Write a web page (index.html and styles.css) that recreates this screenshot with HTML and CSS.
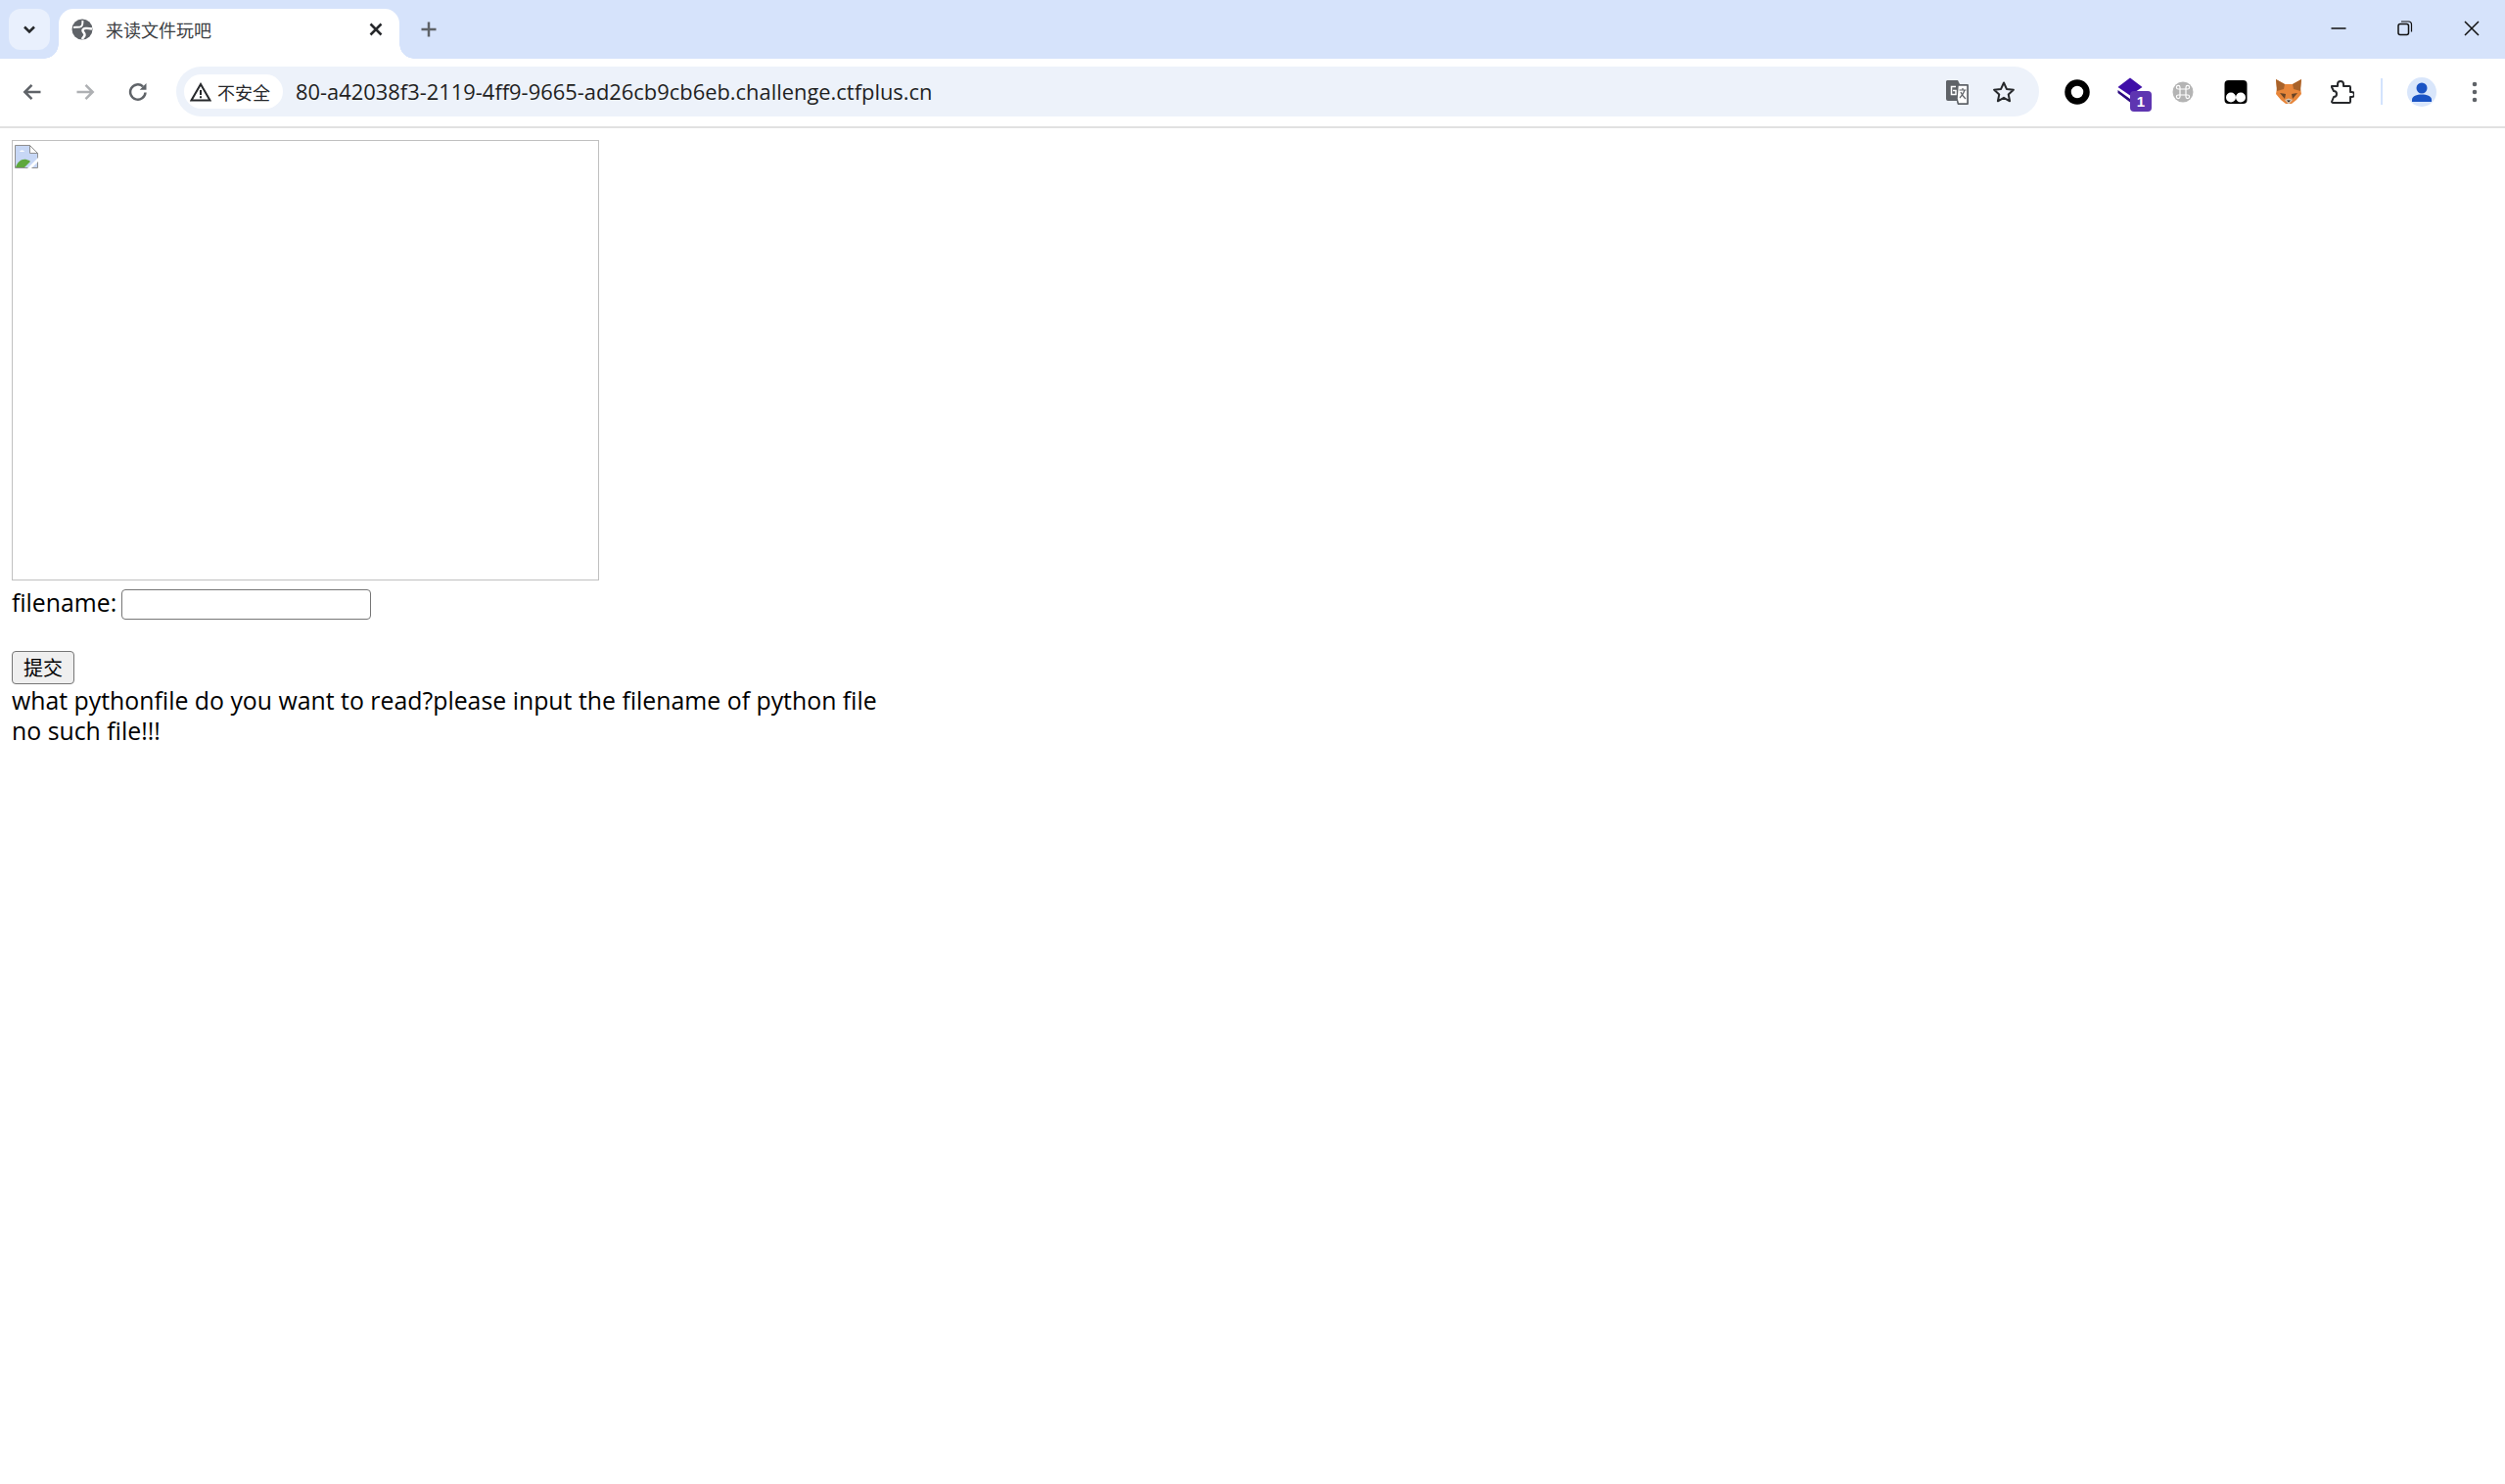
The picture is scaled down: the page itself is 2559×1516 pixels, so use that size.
FILE: index.html
```html
<!DOCTYPE html>
<html lang="zh-CN">
<head>
<meta charset="utf-8">
<title>来读文件玩吧</title>
<link rel="stylesheet" href="styles.css">
</head>
<body>
<header class="chrome">
  <div class="tabstrip">
    <div class="tab-search">
      <svg class="ic" width="18" height="18" viewBox="0 0 18 18"><path d="M4 6.500 9 11.500 14 6.500" class="s-dark w25"/></svg>
    </div>
    <div class="tab">
      <svg class="favicon" width="22" height="22" viewBox="0 0 22 22"><circle cx="11" cy="11" r="10.500" fill="#5f6368"/><path d="M2 9c4-.5 6 .5 8-1s1-3 1.500-6" class="s-white w2"/><path d="M21 10.500c-5-1-9-1-9.500 1.500-.4 2 2.500 2.500 2 5-.2 1.500-2 2.500-2.500 4" class="s-white w25"/></svg>
      <span class="tab-title">来读文件玩吧</span>
      <svg class="tab-close" width="18" height="18" viewBox="0 0 18 18"><path d="M3.500 3.500l11 11M14.500 3.500l-11 11" class="s-dark w25"/></svg>
    </div>
    <svg class="new-tab" width="18" height="18" viewBox="0 0 18 18"><path d="M9 1.500v15M1.500 9h15" class="s-grey w25"/></svg>
    <div class="window-controls">
      <span class="win-btn"><svg width="16" height="16" viewBox="0 0 16 16"><path d="M.5 8h15" class="s-black w15"/></svg></span>
      <span class="win-btn"><svg width="16" height="16" viewBox="0 0 16 16"><rect x="1" y="3.500" width="10.500" height="11" rx="2" class="s-black w15"/><path d="M4 1h7.500a3 3 0 0 1 3 3v7.500" class="s-black w12"/></svg></span>
      <span class="win-btn"><svg width="16" height="16" viewBox="0 0 16 16"><path d="M1 1l14 14M15 1 1 15" class="s-black w15"/></svg></span>
    </div>
  </div>
  <div class="toolbar">
    <span class="tool"><svg width="20" height="20" viewBox="0 0 20 20"><path d="M18.500 10H2.500M9.500 2.800 2.300 10l7.200 7.200" class="s-grey w25"/></svg></span>
    <span class="tool"><svg width="20" height="20" viewBox="0 0 20 20"><path d="M1.500 10h16M10.500 2.800 17.700 10l-7.200 7.200" class="s-light w25"/></svg></span>
    <span class="tool"><svg width="20" height="20" viewBox="0 0 20 20"><path d="M17.500 10.500A7.700 7.700 0 1 1 15 4.300" class="s-grey w25"/><path d="M18.500 1v6.800h-6.800z" fill="#5f6368"/></svg></span>
    <div class="omnibox">
      <div class="chip">
        <svg width="22" height="20" viewBox="0 0 22 20"><path d="M11 2 20.500 18.500h-19z" class="s-dark w2"/><path d="M11 8v5M11 14.300v2" class="s-dark w2"/></svg>
        <span class="chip-text">不安全</span>
      </div>
      <span class="url">80-a42038f3-2119-4ff9-9665-ad26cb9cb6eb.challenge.ctfplus.cn</span>
      <div class="omni-actions">
        <svg width="26" height="26" viewBox="0 0 26 26"><path d="M2 1h11l2 4h7a2 2 0 0 1 2 2v17a2 2 0 0 1-2 2H13l-1-4H3a2 2 0 0 1-2-2V2z" fill="#5f6368"/><path d="M13 6h10v19H13.500L12 20z" fill="#fff" stroke="#5f6368" stroke-width="1.500"/><path d="M11 7.500H6.500v8H11v-4H8" class="s-white w15"/><path d="M14.500 11h7M18 9v2M20 11c-1 4-3 6-5 8M16 13c1 3 3 5 5 7" class="s-grey w12"/></svg>
        <svg width="24" height="24" viewBox="0 0 24 24"><path d="M12 2.500l2.900 6.400 7 .8-5.200 4.700 1.400 6.900-6.100-3.500-6.100 3.500 1.400-6.900-5.200-4.700 7-.8z" class="s-dark w2 join"/></svg>
      </div>
    </div>
    <div class="extensions">
      <span class="ext"><svg width="26" height="26" viewBox="0 0 26 26"><circle cx="13" cy="13" r="9.500" fill="none" stroke="#000" stroke-width="6.500"/></svg></span>
      <span class="ext badge-host">
        <svg class="diamond" width="28" height="28" viewBox="0 0 28 28"><path d="M14 1.500 26.500 11 14 19.500 1.500 11z" fill="#3f0fa8"/><path d="M1.500 14 14 23l5-3-3 6-2 .500L1.500 17z" fill="#2b0a80"/></svg>
        <span class="badge">1</span>
      </span>
      <span class="ext"><svg width="26" height="26" viewBox="0 0 26 26"><circle cx="13" cy="13" r="10.500" fill="#b4b4b4"/><path d="M10 10h6v6h-6zM10 10H8.200a1.800 1.800 0 1 1 1.800-1.800zM16 10V8.200A1.800 1.800 0 1 1 17.800 10zM10 16v1.800A1.800 1.800 0 1 1 8.200 16zM16 16h1.800a1.800 1.800 0 1 1-1.800 1.800z" class="s-white w12"/></svg></span>
      <span class="ext"><svg width="26" height="26" viewBox="0 0 26 26"><rect x="1.500" y="1" width="23" height="24" rx="4" fill="#000"/><circle cx="8" cy="18.500" r="5" fill="#fff"/><circle cx="18" cy="18.500" r="5" fill="#fff"/></svg></span>
      <span class="ext"><svg width="28" height="28" viewBox="0 0 28 28"><path d="M1 1l9 5h8l9-5-1 9 1 6-5 6-5 4h-6l-5-4-5-6 1-6z" fill="#e8863a"/><path d="M1 1l9 5-1 5-7 2zM27 1l-9 5 1 5 7 2z" fill="#a8622a"/><path d="M5 15l6 1-1 5zM23 15l-6 1 1 5z" fill="#6a4526"/><path d="M10 22l4 4.500 4-4.500-4-1.500z" fill="#d8c6b4"/><path d="M12 22.500h4l-2 2z" fill="#222"/></svg></span>
      <span class="ext"><svg width="26" height="26" viewBox="0 0 26 26"><path d="M3 7h6V5a3 3 0 0 1 6 0v2h6a1 1 0 0 1 1 1v5h1.500a2.500 2.500 0 0 1 0 5H22v5a1 1 0 0 1-1 1H5a2 2 0 0 1-2-1l2-5a3 3 0 0 0 0-6L3 8z" class="s-dark w2 join"/></svg></span>
    </div>
    <span class="divider"></span>
    <span class="tool"><span class="avatar"><svg width="26" height="26" viewBox="0 0 26 26"><circle cx="13" cy="9" r="5.500" fill="#1a53c4"/><path d="M3 23v-2c0-4 5-5.500 10-5.500S23 17 23 21v2z" fill="#1a53c4"/></svg></span></span>
    <span class="tool"><svg width="6" height="24" viewBox="0 0 6 24"><circle cx="3" cy="4" r="2.300" fill="#5f6368"/><circle cx="3" cy="12" r="2.300" fill="#5f6368"/><circle cx="3" cy="20" r="2.300" fill="#5f6368"/></svg></span>
  </div>
</header>
<main class="page">
  <div class="broken-image">
    <svg width="24" height="24" viewBox="0 0 24 24"><path d="M.5.5h15l8 8v15H.5z" fill="#c7d7f5" stroke="#8f8f8f"/><path d="M15.500.5v8h8z" fill="#fff" stroke="#8f8f8f"/><path d="M1 23c2-6 6-9 11-8 2 .5 3 1 4 2l-6 6z" fill="#5fa83c"/><path d="M5 7c1-2 4-2 5 0z" fill="#fff"/><path d="M24 13 13 24h4l7-7z" fill="#fff"/></svg>
  </div>
  <form class="file-form">
    <div class="filename-row">
      <label class="filename-label" for="filename">filename:</label>
      <input class="filename-input" id="filename" type="text">
    </div>
    <button class="submit" type="button">提交</button>
  </form>
  <p class="message">what pythonfile do you want to read?please input the filename of python file</p>
  <p class="message">no such file!!!</p>
</main>
</body>
</html>
```
FILE: styles.css
```css
* { box-sizing: border-box; }
html, body { margin: 0; padding: 0; background: #fff; }
body { font-family: "Open Sans", "Noto Sans CJK SC", sans-serif; color: #000; }
svg { display: block; flex: none; }
.s-dark, .s-grey, .s-light, .s-black, .s-white { fill: none; }
.s-dark { stroke: #26282b; }
.s-grey { stroke: #5f6368; }
.s-light { stroke: #aeb0b3; }
.s-black { stroke: #111; }
.s-white { stroke: #fff; }
.w25 { stroke-width: 2.5; }
.w2 { stroke-width: 2; }
.w15 { stroke-width: 1.5; }
.w12 { stroke-width: 1.2; }
.join { stroke-linejoin: round; }

.tabstrip { height: 60px; background: #d6e3fb; display: flex; align-items: flex-start; padding: 9px 0 0 9px; }
.tab-search { width: 42px; height: 42px; border-radius: 12px; background: #e9f0fd; display: flex; align-items: center; justify-content: center; }
.tab { width: 348px; height: 51px; margin-left: 9px; background: #fff; border-radius: 15px 15px 0 0; display: flex; align-items: center; padding: 0 15px 9px 13px; position: relative; }
.tab::before, .tab::after { content: ""; position: absolute; bottom: 0; width: 15px; height: 15px; }
.tab::before { left: -15px; background: radial-gradient(circle at 0 0, transparent 14.500px, #fff 15px); }
.tab::after { right: -15px; background: radial-gradient(circle at 100% 0, transparent 14.500px, #fff 15px); }
.favicon { margin-right: 13px; }
.tab-title { font: 18px/24px "Noto Sans CJK SC", sans-serif; color: #3c4043; flex: 1; }
.new-tab { margin: 12px 0 0 21px; }
.window-controls { margin-left: auto; display: flex; height: 42px; margin-top: -1px; }
.win-btn { width: 68px; height: 42px; display: flex; align-items: center; justify-content: center; }

.toolbar { height: 71px; background: #fff; border-top-left-radius: 15px; border-top-right-radius: 15px; border-bottom: 2px solid #e1e1e1; display: flex; align-items: center; padding: 0 4px 2px 6px; }
.tool, .ext { width: 54px; height: 51px; display: flex; align-items: center; justify-content: center; position: relative; }
.diamond { margin: -4px 0 0 -1px; }
.omnibox { flex: 1; height: 51px; margin: 0 12px; background: #edf2fa; border-radius: 26px; display: flex; align-items: center; padding: 0 24px 0 8px; }
.chip { height: 35px; width: 101px; border-radius: 18px; background: #fff; display: flex; align-items: center; padding-left: 6px; gap: 6px; }
.chip-text { font: 18px/24px "Noto Sans CJK SC", sans-serif; color: #26282b; white-space: nowrap; }
.url { font: 21.9px/28px "Open Sans", sans-serif; color: #1f1f1f; margin-left: 13px; white-space: nowrap; flex: 1; }
.omni-actions { display: flex; align-items: center; gap: 22px; }
.extensions { display: flex; }
.badge { position: absolute; left: 27px; top: 25px; width: 22px; height: 21px; border-radius: 4px; background: #5e35b1; color: #fff; font: bold 15px/21px "Liberation Sans", sans-serif; text-align: center; }
.divider { width: 2px; height: 27px; background: #d3e3fd; margin: 0 13px; }
.avatar { width: 30px; height: 30px; border-radius: 50%; background: #d9e6fb; display: flex; align-items: center; justify-content: center; overflow: hidden; }

.page { padding: 12px 12px 0; }
.broken-image { width: 600px; height: 450px; border: 1px solid #c0c0c0; padding: 4px 2px; }
.file-form { display: block; }
.filename-row { height: 72px; padding-top: 9px; display: flex; align-items: flex-start; gap: 5px; }
.filename-label { font-size: 24.8px; line-height: 31px; margin-top: -2px; }
.filename-input { width: 255px; height: 31px; border: 1px solid #767676; border-radius: 4px; background: #fff; padding: 0; margin: 0; }
.submit { display: block; width: 64px; height: 34px; border: 1px solid #767676; border-radius: 4px; background: #efefef; font: 20px/28px "Noto Sans CJK SC", sans-serif; color: #000; padding: 0; margin: 0; }
.message { font-size: 24.85px; line-height: 31px; margin: 0; white-space: nowrap; }
.message:first-of-type { margin-top: 1px; }
```
